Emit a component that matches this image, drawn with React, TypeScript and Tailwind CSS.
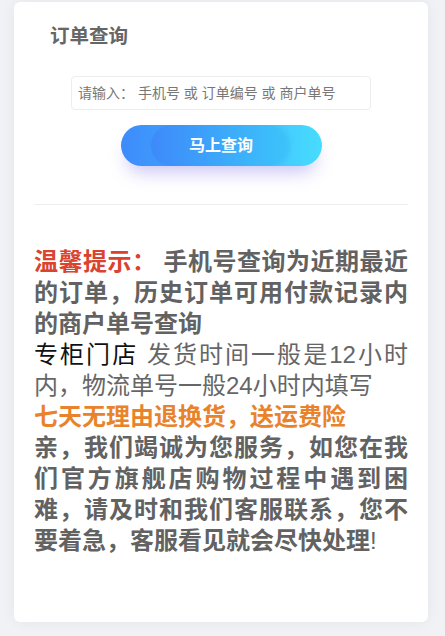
export default function App() {
  return (
    <div className="min-h-screen bg-[#f1f2f5] pt-[2px] font-['Liberation_Sans','Noto_Sans_CJK_SC',sans-serif]">
      <div className="ml-[14px] h-[620px] w-[414px] rounded-[6px] bg-white px-[20px] pt-[21px] shadow-[0_0_14px_rgba(0,0,0,0.06)]">
        <h1 className="pl-[16px] text-[19.5px] font-bold leading-[26px] text-[#666]">订单查询</h1>

        <div className="mt-[27px] flex justify-center">
          <input
            type="text"
            placeholder="请输入： 手机号 或 订单编号 或 商户单号"
            className="h-[34px] w-[300px] rounded-[4px] border border-[#ededed] px-[6px] text-[14px] text-[#555] outline-none placeholder:text-[#777]"
          />
        </div>

        <div className="mt-[15px] flex justify-center">
          <button
            type="button"
            className="relative h-[41px] w-[201px] overflow-hidden rounded-full bg-linear-to-r from-[#3e8afb] to-[#47dcfd] shadow-[0_12px_18px_-6px_rgba(115,100,230,0.38)]"
          >
            <span className="absolute inset-y-0 left-[30px] right-[34px] rounded-full bg-linear-to-r from-[#3e89fa] to-[#3cc4fa] shadow-[2px_0_5px_rgba(40,120,230,0.18)]" />
            <span className="relative text-[16px] font-bold text-white">马上查询</span>
          </button>
        </div>

        <div className="mt-[38px] border-t border-[#eeeeee]" />

        <div className="mt-[41px] text-justify text-[24px] leading-[31px]">
          <p className="font-bold text-[#626262]">
            <span className="text-[#d9432f]">温馨提示：</span> 手机号查询为近期最近的订单，历史订单可用付款记录内的商户单号查询
          </p>
          <p className="text-[#666]">
            <span className="text-[#111]">专柜门店</span> 发货时间一般是12小时内，物流单号一般24小时内填写
          </p>
          <p className="font-bold text-[#e8832c]">七天无理由退换货，送运费险</p>
          <p className="font-bold text-[#626262]">
            亲，我们竭诚为您服务，如您在我们官方旗舰店购物过程中遇到困难，请及时和我们客服联系，您不要着急，客服看见就会尽快处理<span className="font-normal">!</span>
          </p>
        </div>
      </div>
    </div>
  );
}
